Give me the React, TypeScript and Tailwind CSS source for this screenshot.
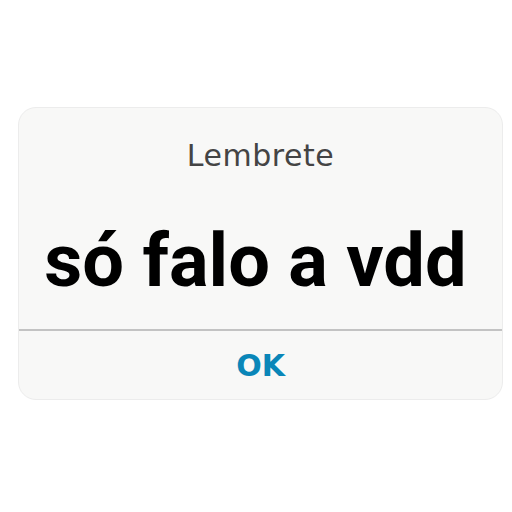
export default function App() {
	return (
		<div className="w-[512px] h-[512px] bg-white pt-[107px] pl-[18px]">
			<div className="w-[485px] h-[293px] rounded-[18px] bg-[#f8f8f7] border border-[#ececec] flex flex-col overflow-hidden">
				{/* Title */}
				<div
					className="pt-[28px] text-center text-[30px] leading-[40px] text-[#444444] tracking-[0.5px]"
					style={{ fontFamily: '"DejaVu Sans", sans-serif' }}
				>
					Lembrete
				</div>

				{/* Message */}
				<div
					className="mt-[40px] pr-[10px] text-center text-[74px] leading-[90px] font-bold text-black"
					style={{ fontFamily: 'Roboto, sans-serif' }}
				>
					só falo a vdd
				</div>

				<div className="mt-[23px] h-[2px] bg-[#c3c3c3]" />

				{/* Action */}
				<button
					className="flex-1 flex items-center justify-center text-[30px] font-bold text-[#0a86b8]"
					style={{ fontFamily: '"DejaVu Sans", sans-serif' }}
				>
					OK
				</button>
			</div>
		</div>
	)
}
